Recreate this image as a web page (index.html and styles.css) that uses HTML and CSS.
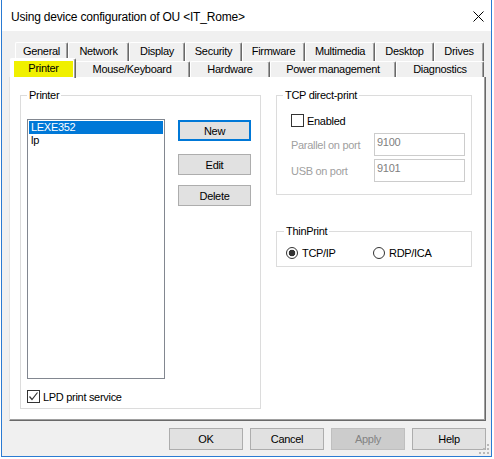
FILE: index.html
```html
<!DOCTYPE html>
<html lang="en">
<head>
    <meta charset="UTF-8">
    <title>Device configuration</title>
    <link rel="stylesheet" href="styles.css">
</head>
<body>
    <div class="window">
        <div class="titlebar">
            <span class="title">Using device configuration of OU &lt;IT_Rome&gt;</span>
            <svg class="close" width="11" height="11" viewBox="0 0 11 11">
                <path d="M0.5 0.5 L10.5 10.5 M10.5 0.5 L0.5 10.5" stroke="#000" stroke-width="1" fill="none"/>
            </svg>
        </div>

        <div class="client">
            <div class="tabs">
                <div class="tab-row back">
                    <div class="tab">General</div>
                    <div class="tab">Network</div>
                    <div class="tab">Display</div>
                    <div class="tab">Security</div>
                    <div class="tab">Firmware</div>
                    <div class="tab">Multimedia</div>
                    <div class="tab">Desktop</div>
                    <div class="tab">Drives</div>
                </div>
                <div class="tab-row front">
                    <div class="tab selected"><span class="marker">Printer</span></div>
                    <div class="tab">Mouse/Keyboard</div>
                    <div class="tab">Hardware</div>
                    <div class="tab">Power management</div>
                    <div class="tab">Diagnostics</div>
                </div>
            </div>

            <div class="panel">
                <fieldset class="group printers">
                    <legend>Printer</legend>
                    <div class="printer-body">
                        <div class="listbox">
                            <div class="item selected">LEXE352</div>
                            <div class="item">lp</div>
                        </div>
                        <div class="side-buttons">
                            <button class="btn default">New</button>
                            <button class="btn edit">Edit</button>
                            <button class="btn delete">Delete</button>
                        </div>
                    </div>
                    <label class="check lpd">
                        <span class="box">
                            <svg width="11" height="11" viewBox="0 0 11 11">
                                <path d="M1.5 5.5 L4 8.5 L9.5 1.5" stroke="#333" stroke-width="1.2" fill="none"/>
                            </svg>
                        </span>
                        LPD print service
                    </label>
                </fieldset>

                <div class="right-col">
                    <fieldset class="group tcp">
                        <legend>TCP direct-print</legend>
                        <div class="tcp-body">
                            <label class="check">
                                <span class="box"></span>
                                Enabled
                            </label>
                            <div class="ports">
                                <span class="port-label">Parallel on port</span>
                                <input class="port" type="text" value="9100" disabled>
                                <span class="port-label">USB on port</span>
                                <input class="port" type="text" value="9101" disabled>
                            </div>
                        </div>
                    </fieldset>

                    <fieldset class="group thinprint">
                        <legend>ThinPrint</legend>
                        <div class="radios">
                            <label class="option"><span class="radio on"></span>TCP/IP</label>
                            <label class="option"><span class="radio"></span>RDP/ICA</label>
                        </div>
                    </fieldset>
                </div>
            </div>

            <div class="footer">
                <button class="btn wide">OK</button>
                <button class="btn wide">Cancel</button>
                <button class="btn wide" disabled>Apply</button>
                <button class="btn wide">Help</button>
            </div>
        </div>

        <!-- size grip -->
        <svg class="grip" width="11" height="11" viewBox="0 0 11 11">
            <rect x="8" y="0" width="2" height="2" fill="#b8b8b8"/>
            <rect x="4" y="4" width="2" height="2" fill="#b8b8b8"/>
            <rect x="8" y="4" width="2" height="2" fill="#b8b8b8"/>
            <rect x="0" y="8" width="2" height="2" fill="#b8b8b8"/>
            <rect x="4" y="8" width="2" height="2" fill="#b8b8b8"/>
            <rect x="8" y="8" width="2" height="2" fill="#b8b8b8"/>
        </svg>
    </div>
</body>
</html>
```

FILE: styles.css
```css
body {
    margin: 0;
    background-color: #ffffff;
    font-family: "Liberation Sans", Arial, sans-serif;
    font-size: 11px;
    letter-spacing: -0.3px;
    color: #000000;
}

.window {
    position: relative;
    margin-left: 1px;
    width: 491px;
    height: 457px;
    box-sizing: border-box;
    border: 1px solid #2a7ad2;
    border-top: none;
    display: flex;
    flex-direction: column;
}

.titlebar {
    height: 31px;
    flex: none;
    background-color: #ffffff;
    display: flex;
    align-items: center;
    justify-content: space-between;
    padding: 0 7px 0 9px;
}

.title {
    font-size: 12px;
    letter-spacing: -0.2px;
    margin-top: 2px;
}

.close {
    margin-top: 1px;
}

.client {
    flex: 1;
    background-color: #f0f0f0;
    display: flex;
    flex-direction: column;
}

/* tab strip, two rows */
.tabs {
    margin: 11px 5px 0 7px;
}

.tab-row {
    display: grid;
}

.tab-row.back {
    height: 19px;
    padding-left: 6px;
    grid-template-columns: 53px 61px 56px 57px 63px 70px 59px 50px;
}

.tab-row.front {
    height: 16px;
    padding-left: 3px;
    grid-template-columns: 62px 116px 80px 126px 88px;
}

.tab {
    background-color: #f0f0f0;
    border-top: 1px solid #ffffff;
    border-left: 1px solid #ffffff;
    border-right: 1px solid #696969;
    box-shadow: inset -1px 0 #a0a0a0;
    border-radius: 2px 2px 0 0;
    text-align: center;
    line-height: 15px;
    white-space: nowrap;
}

.back .tab {
    padding-top: 1px;
}

.tab.selected {
    position: relative;
    z-index: 1;
    margin: -3px -2px -1px -2px;
    background-color: #ffffff;
}

.marker {
    display: block;
    margin: 2px 2px 0 3px;
    height: 16px;
    line-height: 15px;
    background-color: #f0f000;
}

/* tab page */
.panel {
    margin: 0 5px 0 7px;
    height: 344px;
    box-sizing: border-box;
    background-color: #ffffff;
    border-left: 1px solid #e3e3e3;
    border-right: 1px solid #696969;
    border-bottom: 1px solid #696969;
    box-shadow: inset -1px -1px #a0a0a0;
    padding: 12px 0 0 10px;
    display: flex;
    align-items: flex-start;
}

.group {
    margin: 0;
    border: 1px solid #dcdcdc;
    padding: 0 6px;
    box-sizing: border-box;
}

.group legend {
    padding: 0 2px;
    line-height: 13px;
}

.printers {
    width: 241px;
    padding: 17px 9px 5px 6px;
}

.printer-body {
    display: flex;
    gap: 13px;
}

.listbox {
    width: 138px;
    height: 260px;
    box-sizing: border-box;
    border: 1px solid #828790;
    background-color: #ffffff;
    padding: 1px 1px 0 1px;
}

.item {
    height: 13px;
    line-height: 13px;
    padding-left: 2px;
}

.item.selected {
    background-color: #0078d7;
    color: #ffffff;
}

.side-buttons {
    display: flex;
    flex-direction: column;
    padding-top: 1px;
}

.btn {
    font-family: inherit;
    font-size: 11px;
    letter-spacing: -0.3px;
    color: #000000;
    background-color: #e1e1e1;
    border: 1px solid #adadad;
    width: 73px;
    height: 21px;
    padding: 0;
    margin: 0;
}

.btn.default {
    border: 2px solid #0078d7;
}

.btn.edit {
    margin-top: 13px;
}

.btn.delete {
    margin-top: 10px;
}

.btn:disabled {
    background-color: #cccccc;
    border-color: #bfbfbf;
    color: #838383;
}

.check {
    display: flex;
    align-items: center;
    gap: 3px;
    height: 13px;
}

.lpd {
    margin-top: 11px;
}

.box {
    width: 13px;
    height: 13px;
    box-sizing: border-box;
    border: 1px solid #333333;
    background-color: #ffffff;
    display: flex;
    align-items: center;
    justify-content: center;
}

.right-col {
    margin-left: 15px;
    width: 196px;
    display: flex;
    flex-direction: column;
    gap: 30px;
}

.tcp {
    padding: 12px 6px 12px 6px;
}

.tcp-body {
    margin-left: 8px;
}

.ports {
    margin-top: 6px;
    display: grid;
    grid-template-columns: 83px 91px;
    row-gap: 3px;
    align-items: center;
}

.port-label {
    color: #a0a0a0;
}

.port {
    font-family: inherit;
    font-size: 11px;
    letter-spacing: -0.3px;
    width: 91px;
    height: 23px;
    box-sizing: border-box;
    margin: 0;
    border: 1px solid #cccccc;
    background-color: #ffffff;
    color: #808080;
    padding: 0 2px 6px 2px;
}

.thinprint {
    padding: 8px 6px 7px 7px;
}

.radios {
    margin-left: 2px;
    display: grid;
    grid-template-columns: 87px auto;
}

.option {
    display: flex;
    align-items: center;
    gap: 4px;
    height: 13px;
}

.radio {
    width: 12px;
    height: 12px;
    box-sizing: border-box;
    border: 1px solid #333333;
    border-radius: 50%;
    background-color: #ffffff;
}

.radio.on {
    background: radial-gradient(circle, #333333 3px, #ffffff 3.6px);
}

.footer {
    margin-top: 7px;
    padding-right: 5px;
    display: flex;
    justify-content: flex-end;
    gap: 7px;
}

.btn.wide {
    width: 74px;
    height: 22px;
}

.grip {
    position: absolute;
    right: 1px;
    bottom: 1px;
}
```
